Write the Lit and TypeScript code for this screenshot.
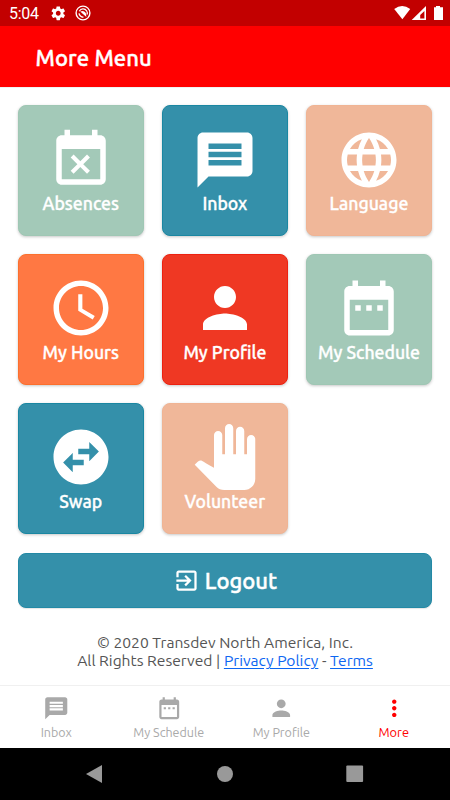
import { LitElement, html, css, svg } from "lit";
import { customElement, property } from "lit/decorators.js";
import { styleMap } from "lit/directives/style-map.js";

const ICONS: Record<string, string> = {
  absences:
    "M9.31 17l2.44-2.44L14.19 17l1.06-1.06-2.44-2.44 2.44-2.44L14.19 10l-2.44 2.44L9.31 10l-1.06 1.06 2.44 2.44-2.44 2.44L9.31 17zM19 3h-1V1h-2v2H8V1H6v2H5c-1.11 0-1.99.9-1.99 2L3 19c0 1.1.89 2 2 2h14c1.1 0 2-.9 2-2V5c0-1.1-.9-2-2-2zm0 16H5V8h14v11z",
  inbox:
    "M20 2H4c-1.1 0-1.99.9-1.99 2L2 22l4-4h14c1.1 0 2-.9 2-2V4c0-1.1-.9-2-2-2zm-2 12H6v-2h12v2zm0-3H6V9h12v2zm0-3H6V6h12v2z",
  language:
    "M11.99 2C6.47 2 2 6.48 2 12s4.47 10 9.99 10C17.52 22 22 17.52 22 12S17.52 2 11.99 2zm6.93 6h-2.95c-.32-1.25-.78-2.45-1.38-3.56 1.84.63 3.37 1.91 4.33 3.56zM12 4.04c.83 1.2 1.48 2.53 1.91 3.96h-3.82c.43-1.43 1.08-2.76 1.91-3.96zM4.26 14C4.1 13.36 4 12.69 4 12s.1-1.36.26-2h3.38c-.08.66-.14 1.32-.14 2 0 .68.06 1.34.14 2H4.26zm.82 2h2.95c.32 1.25.78 2.45 1.38 3.56-1.84-.63-3.37-1.9-4.33-3.56zm2.95-8H5.08c.96-1.66 2.49-2.93 4.33-3.56C8.81 5.55 8.35 6.75 8.03 8zM12 19.96c-.83-1.2-1.48-2.53-1.91-3.96h3.82c-.43 1.43-1.08 2.76-1.91 3.96zM14.34 14H9.66c-.09-.66-.16-1.32-.16-2 0-.68.07-1.35.16-2h4.68c.09.65.16 1.32.16 2 0 .68-.07 1.34-.16 2zm.25 5.56c.6-1.11 1.06-2.31 1.38-3.56h2.95c-.96 1.65-2.49 2.93-4.33 3.56zM16.36 14c.08-.66.14-1.32.14-2 0-.68-.06-1.34-.14-2h3.38c.16.64.26 1.31.26 2s-.1 1.36-.26 2h-3.38z",
  hours:
    "M11.99 2C6.47 2 2 6.48 2 12s4.47 10 9.99 10C17.52 22 22 17.52 22 12S17.52 2 11.99 2zM12 20c-4.42 0-8-3.58-8-8s3.58-8 8-8 8 3.58 8 8-3.58 8-8 8zm.5-13H11v6l5.25 3.15.75-1.23-4.5-2.67z",
  profile:
    "M12 12c2.21 0 4-1.79 4-4s-1.79-4-4-4-4 1.79-4 4 1.79 4 4 4zm0 2c-2.67 0-8 1.34-8 4v2h16v-2c0-2.66-5.33-4-8-4z",
  schedule:
    "M9 11H7v2h2v-2zm4 0h-2v2h2v-2zm4 0h-2v2h2v-2zm2-7h-1V2h-2v2H8V2H6v2H5c-1.11 0-1.99.9-1.99 2L3 20c0 1.1.89 2 2 2h14c1.1 0 2-.9 2-2V6c0-1.1-.9-2-2-2zm0 16H5V9h14v11z",
  swap:
    "M22 12c0-5.52-4.48-10-10-10S2 6.48 2 12s4.48 10 10 10 10-4.48 10-10zm-7-5.5l3.5 3.5-3.5 3.5V11h-4V9h4V6.5zm-6 11L5.5 14 9 10.5V13h4v2H9v2.5z",
  volunteer:
    "M23 5.5V20c0 2.2-1.8 4-4 4h-7.3c-1.08 0-2.1-.43-2.85-1.19L1 14.83s1.26-1.23 1.3-1.25c.22-.19.49-.29.79-.29.22 0 .42.06.6.16.04.01 4.31 2.46 4.31 2.46V4c0-.83.67-1.5 1.5-1.5S11 3.17 11 4v7h1V1.5c0-.83.67-1.5 1.5-1.5S15 .67 15 1.5V11h1V2.5c0-.83.67-1.5 1.5-1.5s1.5.67 1.5 1.5V11h1V5.5c0-.83.67-1.5 1.5-1.5s1.5.67 1.5 1.5z",
  logout:
    "M10.09 15.59L11.5 17l5-5-5-5-1.41 1.41L12.67 11H3v2h9.67l-2.58 2.59zM19 3H5c-1.11 0-2 .9-2 2v4h2V5h14v14H5v-4H3v4c0 1.1.89 2 2 2h14c1.1 0 2-.9 2-2V5c0-1.1-.9-2-2-2z",
  more:
    "M12 8c1.1 0 2-.9 2-2s-.9-2-2-2-2 .9-2 2 .9 2 2 2zm0 2c-1.1 0-2 .9-2 2s.9 2 2 2 2-.9 2-2-.9-2-2-2zm0 6c-1.1 0-2 .9-2 2s.9 2 2 2 2-.9 2-2-.9-2-2-2z",
  gear:
    "M19.43 12.98c.04-.32.07-.64.07-.98s-.03-.66-.07-.98l2.11-1.65c.19-.15.24-.42.12-.64l-2-3.46c-.12-.22-.39-.3-.61-.22l-2.49 1c-.52-.4-1.08-.73-1.69-.98l-.38-2.65C14.46 2.18 14.25 2 14 2h-4c-.25 0-.46.18-.49.42l-.38 2.65c-.61.25-1.17.59-1.69.98l-2.49-1c-.23-.09-.49 0-.61.22l-2 3.46c-.13.22-.07.49.12.64l2.11 1.65c-.04.32-.07.65-.07.98s.03.66.07.98l-2.11 1.65c-.19.15-.24.42-.12.64l2 3.46c.12.22.39.3.61.22l2.49-1c.52.4 1.08.73 1.69.98l.38 2.65c.03.24.24.42.49.42h4c.25 0 .46-.18.49-.42l.38-2.65c.61-.25 1.17-.59 1.69-.98l2.49 1c.23.09.49 0 .61-.22l2-3.46c.12-.22.07-.49-.12-.64l-2.11-1.65zM12 15.5c-1.93 0-3.5-1.57-3.5-3.5s1.57-3.5 3.5-3.5 3.5 1.57 3.5 3.5-1.57 3.5-3.5 3.5z",
};

const TILES = [
  { icon: "absences", label: "Absences", tone: "#a3c9b8", edge: "#9fc7b4" },
  { icon: "inbox", label: "Inbox", tone: "#3490aa", edge: "#1a87a2" },
  { icon: "language", label: "Language", tone: "#f0b799", edge: "#f0b494" },
  { icon: "hours", label: "My Hours", tone: "#ff7843", edge: "#fc702d" },
  { icon: "profile", label: "My Profile", tone: "#ef3823", edge: "#ed2110" },
  { icon: "schedule", label: "My Schedule", tone: "#a3c9b8", edge: "#9fc7b4" },
  { icon: "swap", label: "Swap", tone: "#3490aa", edge: "#1a87a2" },
  { icon: "volunteer", label: "Volunteer", tone: "#f0b799", edge: "#f0b494" },
];

const TABS = [
  { icon: "inbox", label: "Inbox", active: false },
  { icon: "schedule", label: "My Schedule", active: false },
  { icon: "profile", label: "My Profile", active: false },
  { icon: "more", label: "More", active: true },
];

@customElement("glyph-icon")
class GlyphIcon extends LitElement {
  @property() name = "";
  static styles = css`
    :host { display: block; flex: none; }
    .icon { display: block; width: 100%; height: 100%; fill: currentColor; }
  `;
  render() {
    return html`<svg class="icon" viewBox="0 0 24 24">${svg`<path d=${ICONS[this.name]}></path>`}</svg>`;
  }
}

@customElement("status-bar")
class StatusBar extends LitElement {
  static styles = css`
    :host { display: flex; align-items: center; justify-content: space-between; height: 26px; padding: 0 7.5px 0 9px; box-sizing: border-box; background: #c20000; color: #fff; }
    .group { display: flex; align-items: center; }
    .time { width: 41px; font: 16px/26px Roboto, sans-serif; letter-spacing: -0.3px; padding-top: 1px; }
    .gear { width: 16.5px; height: 16.5px; }
    .ring { display: block; width: 16px; height: 16px; margin-left: 8px; }
    .signal { display: block; width: 50px; height: 16px; }
  `;
  render() {
    return html`
      <div class="group">
        <span class="time">5:04</span>
        <glyph-icon class="gear" name="gear"></glyph-icon>
        <svg class="ring" viewBox="0 0 16 16" fill="none" stroke="#fff">
          <circle cx="8" cy="8" r="6.9" stroke-width="1.4"></circle>
          <path d="M4.3 6.2A4.3 4.3 0 0 1 11.6 5.8A4.3 4.3 0 0 1 12 9.6" stroke-width="1.2"></path>
          <path d="M5.2 6.6L11.4 12L11 8.8C10 6.4 8 5.4 5.2 6.6Z" fill="#fff" stroke="none"></path>
          <path d="M4 8.4C4.4 10.4 6 12 8.4 12.2" stroke-width="1.4"></path>
        </svg>
      </div>
      <svg class="signal" viewBox="0 0 50 16" fill="#fff">
        <path d="M1.2 4.1Q9.2-2 17.2 4.1L9.4 14.3Z"></path>
        <path fill-rule="evenodd" d="M18.7 15L33 1V15ZM27.2 13.6H31.4V5.9L27.2 10Z"></path>
        <path d="M43 1h4v1.3h3V15H41V2.3h2Z"></path>
      </svg>
    `;
  }
}

@customElement("menu-tile")
class MenuTile extends LitElement {
  @property() icon = "";
  @property() label = "";
  @property() tone = "";
  @property() edge = "";
  static styles = css`
    :host { display: block; }
    .tile { display: flex; flex-direction: column; align-items: center; height: 131px; padding-top: 20.7px; box-sizing: border-box; border: 1px solid; border-radius: 8px; color: #fff; box-shadow: 0 1px 3px rgba(0, 0, 0, 0.22); }
    .icon { width: 66px; height: 66px; }
    .label { margin-top: -0.7px; font-size: 17.65px; line-height: 24px; font-weight: 500; white-space: nowrap; -webkit-text-stroke: 0.35px #fff; }
  `;
  render() {
    return html`<div class="tile" style=${styleMap({ background: this.tone, borderColor: this.edge })}>
      <glyph-icon class="icon" name=${this.icon}></glyph-icon>
      <span class="label">${this.label}</span>
    </div>`;
  }
}

@customElement("app-root")
class AppRoot extends LitElement {
  static styles = css`
    :host { display: flex; flex-direction: column; height: 800px; width: 450px; overflow: hidden; background: #fff; font-family: Ubuntu, "Noto Sans", sans-serif; }
    .title { height: 61px; padding: 1px 0 0 35.5px; box-sizing: border-box; background: #f00; color: #fff; font-size: 22px; line-height: 62px; font-weight: 500; letter-spacing: 0.1px; -webkit-text-stroke: 0.45px #fff; flex: none; }
    .content { flex: 1; border-top: 1px solid #f1f1f1; padding: 17px 17.5px 0; }
    .grid { display: grid; grid-template-columns: repeat(3, 126.5px); gap: 17.8px 17.6px; }
    .logout { display: flex; align-items: center; justify-content: center; gap: 5px; width: 414.8px; height: 55px; margin-top: 19.5px; box-sizing: border-box; border: 1px solid #2389a5; border-radius: 8px; background: #3490aa; color: #fff; font-size: 22px; font-weight: 500; box-shadow: 0 1px 1px rgba(0, 0, 0, 0.1); }
    .logout-icon { width: 27px; height: 27px; }
    .logout-label { -webkit-text-stroke: 0.45px #fff; }
    .legal { margin-top: 25px; text-align: center; font-size: 15.65px; line-height: 18px; color: #555; white-space: nowrap; }
    .link { color: #0d66f2; text-decoration: underline; text-underline-offset: 2px; }
    .tabs { display: grid; grid-template-columns: repeat(4, 1fr); height: 63px; box-sizing: border-box; border-top: 1px solid #f0f0f0; flex: none; }
    .tab { display: flex; flex-direction: column; align-items: center; padding-top: 9px; color: #a9a9a9; font-size: 12.5px; line-height: 17px; white-space: nowrap; }
    .tab.active { color: #f00; }
    .tab-icon { width: 26.5px; height: 26.5px; margin-bottom: 2px; }
    .tab.active .tab-label { font-size: 12.8px; }
    .system { display: grid; grid-template-columns: repeat(3, 130px); justify-content: center; justify-items: center; align-items: center; height: 52px; background: #000; flex: none; }
    .key { display: block; width: 18px; height: 18px; fill: #999; }
  `;
  render() {
    return html`
      <status-bar></status-bar>
      <header class="title">More Menu</header>
      <main class="content">
        <div class="grid">
          ${TILES.map(
            (t) => html`<menu-tile icon=${t.icon} label=${t.label} tone=${t.tone} edge=${t.edge}></menu-tile>`
          )}
        </div>
        <div class="logout"><glyph-icon class="logout-icon" name="logout"></glyph-icon><span class="logout-label">Logout</span></div>
        <div class="legal">
          <div class="owner">© 2020 Transdev North America, Inc.</div>
          <div class="rights">All Rights Reserved | <a class="link">Privacy Policy</a> - <a class="link">Terms</a></div>
        </div>
      </main>
      <nav class="tabs">
        ${TABS.map(
          (t) => html`<div class="tab ${t.active ? "active" : ""}">
            <glyph-icon class="tab-icon" name=${t.icon}></glyph-icon>
            <span class="tab-label">${t.label}</span>
          </div>`
        )}
      </nav>
      <div class="system">
        <svg class="key" viewBox="0 0 18 18"><path d="M0 9L16 0V18Z"></path></svg>
        <svg class="key" viewBox="0 0 18 18"><circle cx="9" cy="9" r="8"></circle></svg>
        <svg class="key" viewBox="0 0 18 18"><rect x=".3" y=".5" width="16.8" height="16.5" rx="1"></rect></svg>
      </div>
    `;
  }
}
